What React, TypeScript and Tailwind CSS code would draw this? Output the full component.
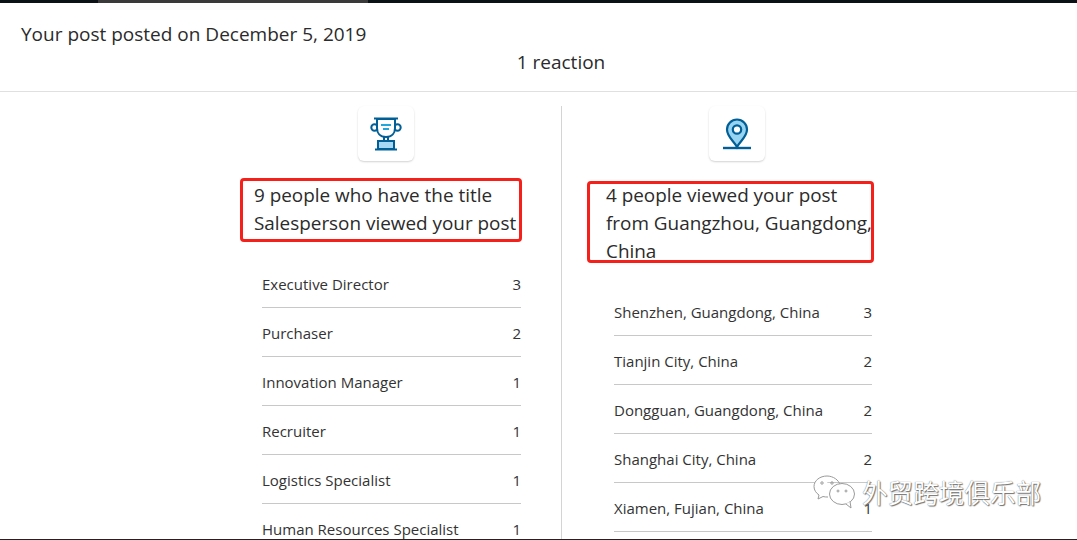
const font = { fontFamily: '"Open Sans", "Noto Sans", sans-serif' };

const titles = [
  ['Executive Director', 3],
  ['Purchaser', 2],
  ['Innovation Manager', 1],
  ['Recruiter', 1],
  ['Logistics Specialist', 1],
  ['Human Resources Specialist', 1],
] as const;

const places = [
  ['Shenzhen, Guangdong, China', 3],
  ['Tianjin City, China', 2],
  ['Dongguan, Guangdong, China', 2],
  ['Shanghai City, China', 2],
  ['Xiamen, Fujian, China', 1],
] as const;

const Trophy = () => (
  <svg width="32" height="34" viewBox="0 0 32 34" fill="none">
    <circle cx="4.5" cy="10.5" r="3.2" stroke="#005f96" strokeWidth="2" />
    <circle cx="27.5" cy="10.5" r="3.2" stroke="#005f96" strokeWidth="2" />
    <path d="M7 2 V11 C7 16 10 20 16 20 C22 20 25 16 25 11 V2 Z" fill="#fff" stroke="#005f96" strokeWidth="2" />
    <path d="M4 1.5 H28" stroke="#005f96" strokeWidth="2" />
    <path d="M11 8 H21 M13 12 H19" stroke="#1fa8dc" strokeWidth="2" />
    <path d="M14 20 V24 M18 20 V24" stroke="#005f96" strokeWidth="2" />
    <rect x="8" y="24" width="16" height="8" fill="#a6d8f5" stroke="#005f96" strokeWidth="2" />
    <path d="M5 32.5 H27" stroke="#005f96" strokeWidth="2" />
  </svg>
);

const Pin = () => (
  <svg width="30" height="34" viewBox="0 0 30 34" fill="none">
    <path d="M15 30 C12 24 5 20 5 12.5 A10 10 0 0 1 25 12.5 C25 20 18 24 15 30 Z" fill="#96d4f2" stroke="#005f96" strokeWidth="2.2" />
    <circle cx="15" cy="12.5" r="4.2" fill="#fff" stroke="#005f96" strokeWidth="2.2" />
    <path d="M1 31 H29" stroke="#005f96" strokeWidth="2.4" />
  </svg>
);

const IconTile = ({ children }: { children: React.ReactNode }) => (
  <div className="mx-auto flex h-[55px] w-[56px] items-center justify-center rounded-md bg-white shadow-[0_1px_2px_rgba(0,0,0,0.18)]">
    {children}
  </div>
);

const Rows = ({ items, indent }: { items: readonly (readonly [string, number])[]; indent: string }) => (
  <ul className={indent}>
    {items.map(([label, count]) => (
      <li
        key={label}
        className="flex h-[49px] items-center justify-between border-b border-[#c8c8c8] pt-[3px] text-[15px] text-[#333333]"
      >
        <span>{label}</span>
        <span>{count}</span>
      </li>
    ))}
  </ul>
);

export default function App() {
  return (
    <div className="relative h-[540px] w-[1077px] overflow-hidden bg-white" style={font}>
      <div className="flex h-[3px] bg-[#0b1215]">
        <div className="ml-[98px] w-[270px] bg-[#3a3a3a]" />
      </div>
      <header className="h-[89px] border-b border-[#e0e0e0] text-[19px] text-[#2b2b2b]">
        <p className="pl-[21px] pt-[17px] leading-[28px]">Your post posted on December 5, 2019</p>
        <p className="w-[1122px] text-center leading-[28px]">1 reaction</p>
      </header>

      <main className="ml-[211px] mt-[14px] flex h-[434px]">
        <section className="h-full w-[351px] border-r border-[#d4d4d4] pr-px">
          <IconTile>
            <Trophy />
          </IconTile>
          <h2 className="ml-[43px] mt-[20px] h-[78px] text-[18.9px] font-normal leading-[28px] text-[#2b2b2b]">
            9 people who have the title
            <br />
            Salesperson viewed your post
          </h2>
          <Rows items={titles} indent="ml-[51px] w-[259px]" />
        </section>
        <section className="h-full w-[350px]">
          <IconTile>
            <Pin />
          </IconTile>
          <h2 className="ml-[44px] mt-[20px] h-[106px] whitespace-nowrap text-[18.9px] font-normal leading-[28px] text-[#2b2b2b]">
            4 people viewed your post
            <br />
            from Guangzhou, Guangdong,
            <br />
            China
          </h2>
          <Rows items={places} indent="ml-[52px] w-[258px]" />
        </section>
      </main>

      {/* red annotation boxes drawn over the screenshot */}
      <div className="absolute left-[240px] top-[178px] h-[64px] w-[282px] rounded-sm border-[3px] border-[#f5201a]" />
      <div className="absolute left-[587px] top-[181px] h-[82px] w-[287px] rounded-sm border-[3px] border-[#f5201a]" />

      {/* watermark */}
      <div className="absolute left-[813px] top-[474px] flex items-center gap-[7px]">
        <svg width="42" height="36" viewBox="0 0 42 36" fill="none" stroke="#9a9a9a" strokeWidth="1">
          <path d="M14 2 C7 2 1 6.5 1 12.5 C1 16 3 19 6 21 L5 25 L10 22.5 C11.5 23 13 23 15 23" fill="#ffffff" />
          <path d="M14 2 C20 2 26 6 27 11" />
          <ellipse cx="29" cy="20" rx="12.5" ry="10.5" fill="#ffffff" />
          <path d="M33 30 L38 34 L37 27.5" fill="#ffffff" />
          <circle cx="9" cy="9" r="1.2" />
          <circle cx="19" cy="9" r="1.2" />
          <circle cx="25" cy="17" r="1" />
          <circle cx="33" cy="17" r="1" />
        </svg>
        <span
          className="text-[25.6px] leading-none text-[#ffffff] [text-shadow:0_0_1px_#555,1px_1px_1px_#777]"
          style={{ fontFamily: '"Noto Sans CJK SC", sans-serif' }}
        >
          外贸跨境俱乐部
        </span>
      </div>

      <div className="absolute bottom-0 left-0 h-px w-full bg-[#222222]" />
    </div>
  );
}
